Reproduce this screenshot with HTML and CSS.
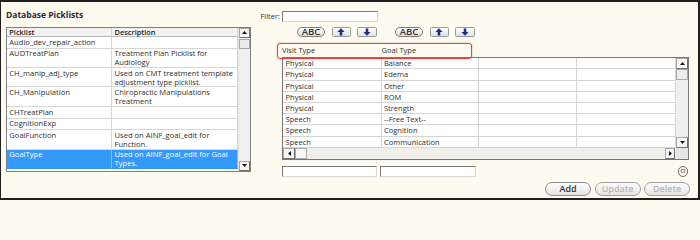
FILE: index.html
```html
<!DOCTYPE html>
<html>
<head>
<meta charset="utf-8">
<link rel="stylesheet" href="styles.css">
</head>
<body>
<div class="frame">
  <section class="left">
    <h1 class="title">Database Picklists</h1>
    <div class="list">
      <div class="list-body">
        <div class="list-row list-head"><span>Picklist</span><span>Description</span></div>
        <div class="list-row"><span>Audio_dev_repair_action</span><span></span></div>
        <div class="list-row"><span>AUDTreatPlan</span><span>Treatment Plan Picklist for<br>Audiology</span></div>
        <div class="list-row"><span>CH_manip_adj_type</span><span>Used on CMT treatment template<br>adjustment type picklist.</span></div>
        <div class="list-row"><span>CH_Manipulation</span><span>Chiropractic Manipulations<br>Treatment</span></div>
        <div class="list-row"><span>CHTreatPlan</span><span></span></div>
        <div class="list-row"><span>CognitionExp</span><span></span></div>
        <div class="list-row"><span>GoalFunction</span><span>Used on AINF_goal_edit for<br>Function.</span></div>
        <div class="list-row selected"><span>GoalType</span><span>Used on AINF_goal_edit for Goal<br>Types.</span></div>
      </div>
      <div class="vscroll">
        <span class="sbtn"><svg width="5" height="3" viewBox="0 0 5 3"><path d="M0 3L2.5 0L5 3Z"/></svg></span>
        <span class="thumb"></span>
        <span class="track"></span>
        <span class="sbtn"><svg width="5" height="3" viewBox="0 0 5 3"><path d="M0 0L2.5 3L5 0Z"/></svg></span>
      </div>
    </div>
  </section>

  <section class="right">
    <div class="filter-row"><label class="filter-label">Filter:</label><input class="field w96" type="text"></div>
    <div class="tool-row">
      <div class="tool-group">
        <button class="abc">ABC</button>
        <button class="arrow-btn"><svg width="8" height="8" viewBox="0 0 8 8"><path d="M4 0.3L7.6 4H5.3V7.6H2.7V4H0.4Z"/></svg></button>
        <button class="arrow-btn wide"><svg width="8" height="8" viewBox="0 0 8 8"><path d="M4 7.7L7.6 4H5.3V0.4H2.7V4H0.4Z"/></svg></button>
      </div>
      <div class="tool-group">
        <button class="abc">ABC</button>
        <button class="arrow-btn"><svg width="8" height="8" viewBox="0 0 8 8"><path d="M4 0.3L7.6 4H5.3V7.6H2.7V4H0.4Z"/></svg></button>
        <button class="arrow-btn wide"><svg width="8" height="8" viewBox="0 0 8 8"><path d="M4 7.7L7.6 4H5.3V0.4H2.7V4H0.4Z"/></svg></button>
      </div>
    </div>
    <div class="grid-head"><span>Visit Type</span><span>Goal Type</span></div>
    <div class="grid">
      <div class="grid-main">
        <div class="grid-rows">
          <div class="grow"><span>Physical</span><span>Balance</span><span></span><span></span></div>
          <div class="grow"><span>Physical</span><span>Edema</span><span></span><span></span></div>
          <div class="grow"><span>Physical</span><span>Other</span><span></span><span></span></div>
          <div class="grow"><span>Physical</span><span>ROM</span><span></span><span></span></div>
          <div class="grow"><span>Physical</span><span>Strength</span><span></span><span></span></div>
          <div class="grow"><span>Speech</span><span>--Free Text--</span><span></span><span></span></div>
          <div class="grow"><span>Speech</span><span>Cognition</span><span></span><span></span></div>
          <div class="grow"><span>Speech</span><span>Communication</span><span></span><span></span></div>
        </div>
        <div class="vscroll gv">
          <span class="sbtn"><svg width="5" height="3" viewBox="0 0 5 3"><path d="M0 3L2.5 0L5 3Z"/></svg></span>
          <span class="thumb"></span>
          <span class="track"></span>
          <span class="sbtn"><svg width="5" height="3" viewBox="0 0 5 3"><path d="M0 0L2.5 3L5 0Z"/></svg></span>
        </div>
      </div>
      <div class="hscroll-row">
        <div class="hscroll">
          <span class="hbtn"><svg width="3" height="5" viewBox="0 0 3 5"><path d="M3 0L0 2.5L3 5Z"/></svg></span>
          <span class="hthumb"></span>
          <span class="htrack"></span>
          <span class="hbtn end"><svg width="3" height="5" viewBox="0 0 3 5"><path d="M0 0L3 2.5L0 5Z"/></svg></span>
        </div>
        <span class="corner"></span>
      </div>
    </div>
    <div class="edit-row">
      <input class="field w95" type="text">
      <input class="field w96" type="text">
      <span class="ci">CI</span>
    </div>
    <div class="action-row">
      <button class="act">Add</button>
      <button class="act disabled">Update</button>
      <button class="act disabled">Delete</button>
    </div>
    <div class="highlight"></div>
  </section>
</div>
</body>
</html>
```

FILE: styles.css
```css
* { box-sizing: border-box; }
html { background: #fdfaf0; }
html, body { margin: 0; padding: 0; }
body {
  width: 700px;
  height: 200px;
  font-family: "Open Sans", "Noto Sans", sans-serif;
  font-size: 7.6px;
  color: #2e2e2e;
  background: #fdfaf0;
  overflow: hidden;
}
.frame {
  width: 700px;
  height: 200px;
  border-style: solid;
  border-color: #1f1f1f;
  border-width: 2px 2px 2px 1px;
  background: #fdfaf0;
  display: flex;
}

/* left panel */
.left { margin-left: 5px; width: 246px; padding-top: 7px; }
.title {
  margin: 0 0 6px;
  font-size: 8.5px;
  font-weight: 700;
  line-height: 12px;
  color: #2a2a2a;
}
.list {
  display: flex;
  height: 144.7px;
  width: 245px;
  border: 1px solid #7f7f7f;
  background: #fff;
}
.list-body { width: 231px; overflow: hidden; }
.list-row { display: grid; grid-template-columns: 105px 126px; }
.list-row > span {
  min-height: 11.7px;
  padding: 0.8px 2px 0 2.3px;
  line-height: 8.8px;
  border-right: 1px solid #d6d6d6;
  border-bottom: 1px solid #d6d6d6;
  white-space: nowrap;
}
.list-row > span + span { padding-left: 2.5px; }
.list-head > span {
  min-height: 0;
  height: 9px;
  line-height: 8px;
  padding-top: 0;
  font-size: 7.4px;
  font-weight: 600;
  background: #f2f2f2;
  border-bottom-color: #b9b9b9;
  color: #222;
}
.list-row.selected > span {
  background: #3399ff;
  color: #fff;
  border-right-color: #7cbcff;
  border-bottom-color: #3399ff;
}

/* scrollbars */
.vscroll {
  width: 12px;
  display: flex;
  flex-direction: column;
  background: #f0f0f0;
  border-left: 1px solid #e2e2e2;
}
.sbtn, .hbtn {
  display: flex;
  align-items: center;
  justify-content: center;
  background: #f5f5f5;
  border: 1px solid #a8a8a8;
  border-right-color: #6f6f6f;
  border-bottom-color: #6f6f6f;
}
.sbtn { height: 9.5px; }
.vscroll .thumb {
  height: 10px;
  margin-top: 1px;
  background: #ececec;
  border: 1px solid #a8a8a8;
}
.vscroll .track { flex: 1; }
svg path { fill: #111; }

/* right panel */
.right {
  position: relative;
  margin-left: 8px;
  width: 430px;
  display: flex;
  flex-direction: column;
  font-size: 7.5px;
}
.filter-row {
  display: flex;
  align-items: center;
  margin-top: 8.7px;
  height: 11px;
}
.filter-label {
  width: 20px;
  margin-right: 2px;
  text-align: right;
  color: #333;
}
.field {
  -webkit-appearance: none;
  appearance: none;
  margin: 0;
  padding: 0;
  height: 11.3px;
  background: #fff;
  border: 1px solid #d8d8d8;
  border-top-color: #7a7a7a;
  border-left-color: #7a7a7a;
  outline: none;
}
.w96 { width: 96px; }
.w95 { width: 95.4px; }

.tool-row {
  display: flex;
  gap: 18px;
  margin-top: 5px;
  height: 10.6px;
  padding-left: 37px;
}
.tool-group { display: flex; gap: 6.5px; }
button {
  font-family: inherit;
  margin: 0;
  padding: 0;
  cursor: default;
}
.abc {
  width: 28px;
  height: 10.6px;
  border: 1px solid #7c7c7c;
  border-radius: 6px;
  background: linear-gradient(#ffffff, #dcdcdc);
  font-size: 9.5px;
  font-weight: 600;
  line-height: 8px;
  color: #333;
}
.arrow-btn {
  width: 19px;
  height: 10.6px;
  border: 1px solid #9c9c9c;
  border-radius: 1.5px;
  background: linear-gradient(#ffffff, #e0e0e0);
  display: flex;
  align-items: center;
  justify-content: center;
}
.arrow-btn.wide { width: 20px; }
.arrow-btn svg path { fill: #1b2d86; }

.grid-head {
  display: grid;
  grid-template-columns: 99px 99px;
  margin-top: 7.7px;
  margin-left: 22px;
  height: 11px;
  line-height: 11px;
  color: #333;
}
.grid-head span + span { padding-left: 0.5px; }

.grid {
  margin-top: 1.3px;
  margin-left: 22px;
  width: 407px;
  border: 1px solid #777;
  background: #fff;
}
.grid-main { display: flex; }
.grid-rows { width: 393px; }
.grow {
  display: grid;
  grid-template-columns: 99px 97px 98px 99px;
}
.grow > span {
  height: 11.2px;
  line-height: 10.2px;
  padding-left: 2.6px;
  border-right: 1px solid #d4d4d4;
  border-bottom: 1px solid #d4d4d4;
  white-space: nowrap;
}
.grow > span + span { padding-left: 2px; }
.vscroll.gv { width: 12px; border-left: none; background: #efefef; }
.gv .sbtn { height: 10.3px; }
.gv .thumb { height: 11px; margin-top: 0.5px; }

.hscroll-row { display: flex; height: 11.6px; }
.hscroll {
  width: 393px;
  display: flex;
  background: #f0efea;
  padding: 0.5px 0;
}
.hbtn { width: 12px; }
.hthumb {
  width: 11.7px;
  background: #f6f6f6;
  border: 1px solid #a8a8a8;
}
.htrack { flex: 1; }
.hbtn.end { width: 10px; margin-right: 1px; }
.corner { width: 12px; background: #e6e6e6; }

.edit-row {
  display: flex;
  align-items: center;
  gap: 2.3px;
  margin-top: 5.4px;
  margin-left: 22px;
  height: 11.6px;
}
.edit-row .field { height: 11.6px; }
.ci {
  margin-left: auto;
  margin-right: 2px;
  width: 10.5px;
  height: 10.5px;
  border: 1px solid #6a6a6a;
  border-radius: 50%;
  font-size: 6px;
  font-weight: 600;
  line-height: 8.5px;
  text-align: center;
  color: #555;
  letter-spacing: -0.3px;
}
.action-row {
  display: flex;
  justify-content: flex-end;
  gap: 3.7px;
  margin-top: 4.4px;
  height: 14.3px;
}
.act {
  width: 45.8px;
  height: 14.3px;
  border: 1px solid #8c8c8c;
  border-radius: 8px;
  background: linear-gradient(#fdfdfd, #e4e4e4);
  font-size: 9px;
  font-weight: 600;
  line-height: 12px;
  color: #333;
}
.act.disabled { color: #b8b8b8; border-color: #a0a0a0; }

.highlight {
  position: absolute;
  left: 17.3px;
  top: 41.3px;
  width: 194.4px;
  height: 15.7px;
  border: 1.5px solid #e5403b;
  border-radius: 3px;
  box-shadow: 0 0 2px rgba(229, 64, 59, 0.45);
  pointer-events: none;
}
```
